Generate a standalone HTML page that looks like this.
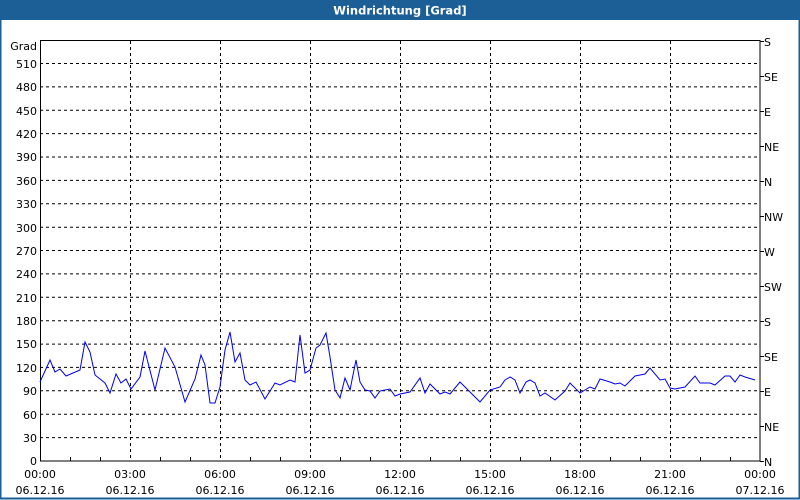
<!DOCTYPE html>
<html><head><meta charset="utf-8"><style>
html,body{margin:0;padding:0;background:#fff;}
svg{display:block;font-family:"DejaVu Sans","Liberation Sans",sans-serif;}
</style></head><body>
<svg width="800" height="500" viewBox="0 0 800 500" xmlns="http://www.w3.org/2000/svg">
<rect x="0" y="0" width="800" height="500" fill="#fff"/>
<rect x="0.5" y="0.5" width="799" height="498" fill="none" stroke="#1c5f96" stroke-width="2"/>
<rect x="0" y="0" width="800" height="20" fill="#1c5f96"/>
<text x="400" y="14.5" fill="#fff" font-size="11.5" font-weight="bold" text-anchor="middle">Windrichtung [Grad]</text>
<g stroke="#000" stroke-width="1" stroke-dasharray="3,3" fill="none">
<path d="M40 437.6H760M40 414.2H760M40 390.8H760M40 367.4H760M40 344.1H760M40 320.7H760M40 297.3H760M40 273.9H760M40 250.5H760M40 227.2H760M40 203.8H760M40 180.4H760M40 157H760M40 133.6H760M40 110.3H760M40 86.9H760M40 63.5H760"/>
<path d="M130.5 41V461M220.5 41V461M310.5 41V461M400.5 41V461M490.5 41V461M580.5 41V461M670.5 41V461"/>
</g>
<rect x="40.5" y="40.5" width="719.5" height="420.5" fill="none" stroke="#000" stroke-width="1"/>
<g stroke="#000" stroke-width="1">
<path d="M70.5 461v-4M100.5 461v-4M160.5 461v-4M190.5 461v-4M250.5 461v-4M280.5 461v-4M340.5 461v-4M370.5 461v-4M430.5 461v-4M460.5 461v-4M520.5 461v-4M550.5 461v-4M610.5 461v-4M640.5 461v-4M700.5 461v-4M730.5 461v-4"/>
<path d="M760 41.5h4M760 76.5h4M760 111.5h4M760 146.5h4M760 181.5h4M760 216.5h4M760 251.5h4M760 286.5h4M760 321.5h4M760 356.5h4M760 391.5h4M760 426.5h4M760 461.5h4"/>
</g>
<g font-size="11" fill="#000" text-anchor="end">
<text x="37" y="50">Grad</text>
<text x="37" y="68">510</text><text x="37" y="91">480</text><text x="37" y="115">450</text><text x="37" y="138">420</text><text x="37" y="161">390</text><text x="37" y="185">360</text><text x="37" y="208">330</text><text x="37" y="232">300</text><text x="37" y="255">270</text><text x="37" y="278">240</text><text x="37" y="302">210</text><text x="37" y="325">180</text><text x="37" y="348">150</text><text x="37" y="372">120</text><text x="37" y="395">90</text><text x="37" y="419">60</text><text x="37" y="442">30</text><text x="37" y="465">0</text>
</g>
<g font-size="11" fill="#000">
<text x="764" y="46">S</text><text x="764" y="81">SE</text><text x="764" y="116">E</text><text x="764" y="151">NE</text><text x="764" y="186">N</text><text x="764" y="221">NW</text><text x="764" y="256">W</text><text x="764" y="291">SW</text><text x="764" y="326">S</text><text x="764" y="361">SE</text><text x="764" y="396">E</text><text x="764" y="431">NE</text><text x="764" y="466">N</text>
</g>
<g font-size="11" fill="#000" text-anchor="middle">
<text x="40" y="478">00:00</text><text x="40" y="494">06.12.16</text>
<text x="130" y="478">03:00</text><text x="130" y="494">06.12.16</text>
<text x="220" y="478">06:00</text><text x="220" y="494">06.12.16</text>
<text x="310" y="478">09:00</text><text x="310" y="494">06.12.16</text>
<text x="400" y="478">12:00</text><text x="400" y="494">06.12.16</text>
<text x="490" y="478">15:00</text><text x="490" y="494">06.12.16</text>
<text x="580" y="478">18:00</text><text x="580" y="494">06.12.16</text>
<text x="670" y="478">21:00</text><text x="670" y="494">06.12.16</text>
<text x="760" y="478">00:00</text><text x="760" y="494">07.12.16</text>
</g>
<polyline fill="none" stroke="#0000ee" stroke-width="1" points="40,382 50,360 55,372 60,369 66,376 80,370 85,342 90,352 95,375 105,383 110,393 116,374 121,383 126,379 131,389 140,377 145,351 155,390 165,348 175,367 185,402 195,379 201,355 205,365 210,403 215,403 220,387 225,350 230,332 235,362 240,353 245,380 250,385 256,382 265,399 275,383 280,385 290,380 295,382 300,335 305,373 310,370 316,348 320,345 326,333 330,357 335,390 340,398 345,378 350,390 356,360 360,382 365,390 370,391 375,398 380,391 390,389 395,396 400,394 410,392 420,378 425,393 430,384 440,394 445,392 450,394 460,382 470,392 480,402 490,390 500,387 505,380 510,377 515,380 520,393 526,382 530,380 535,383 540,396 545,393 555,400 565,391 570,383 580,393 590,387 595,389 600,379 610,382 615,384 620,383 625,386 635,376 645,374 650,368 660,380 665,379 670,388 675,389 685,387 695,376 700,383 710,383 715,385 725,376 730,376 735,382 740,375 745,377 755,380"/>
</svg>
</body></html>
